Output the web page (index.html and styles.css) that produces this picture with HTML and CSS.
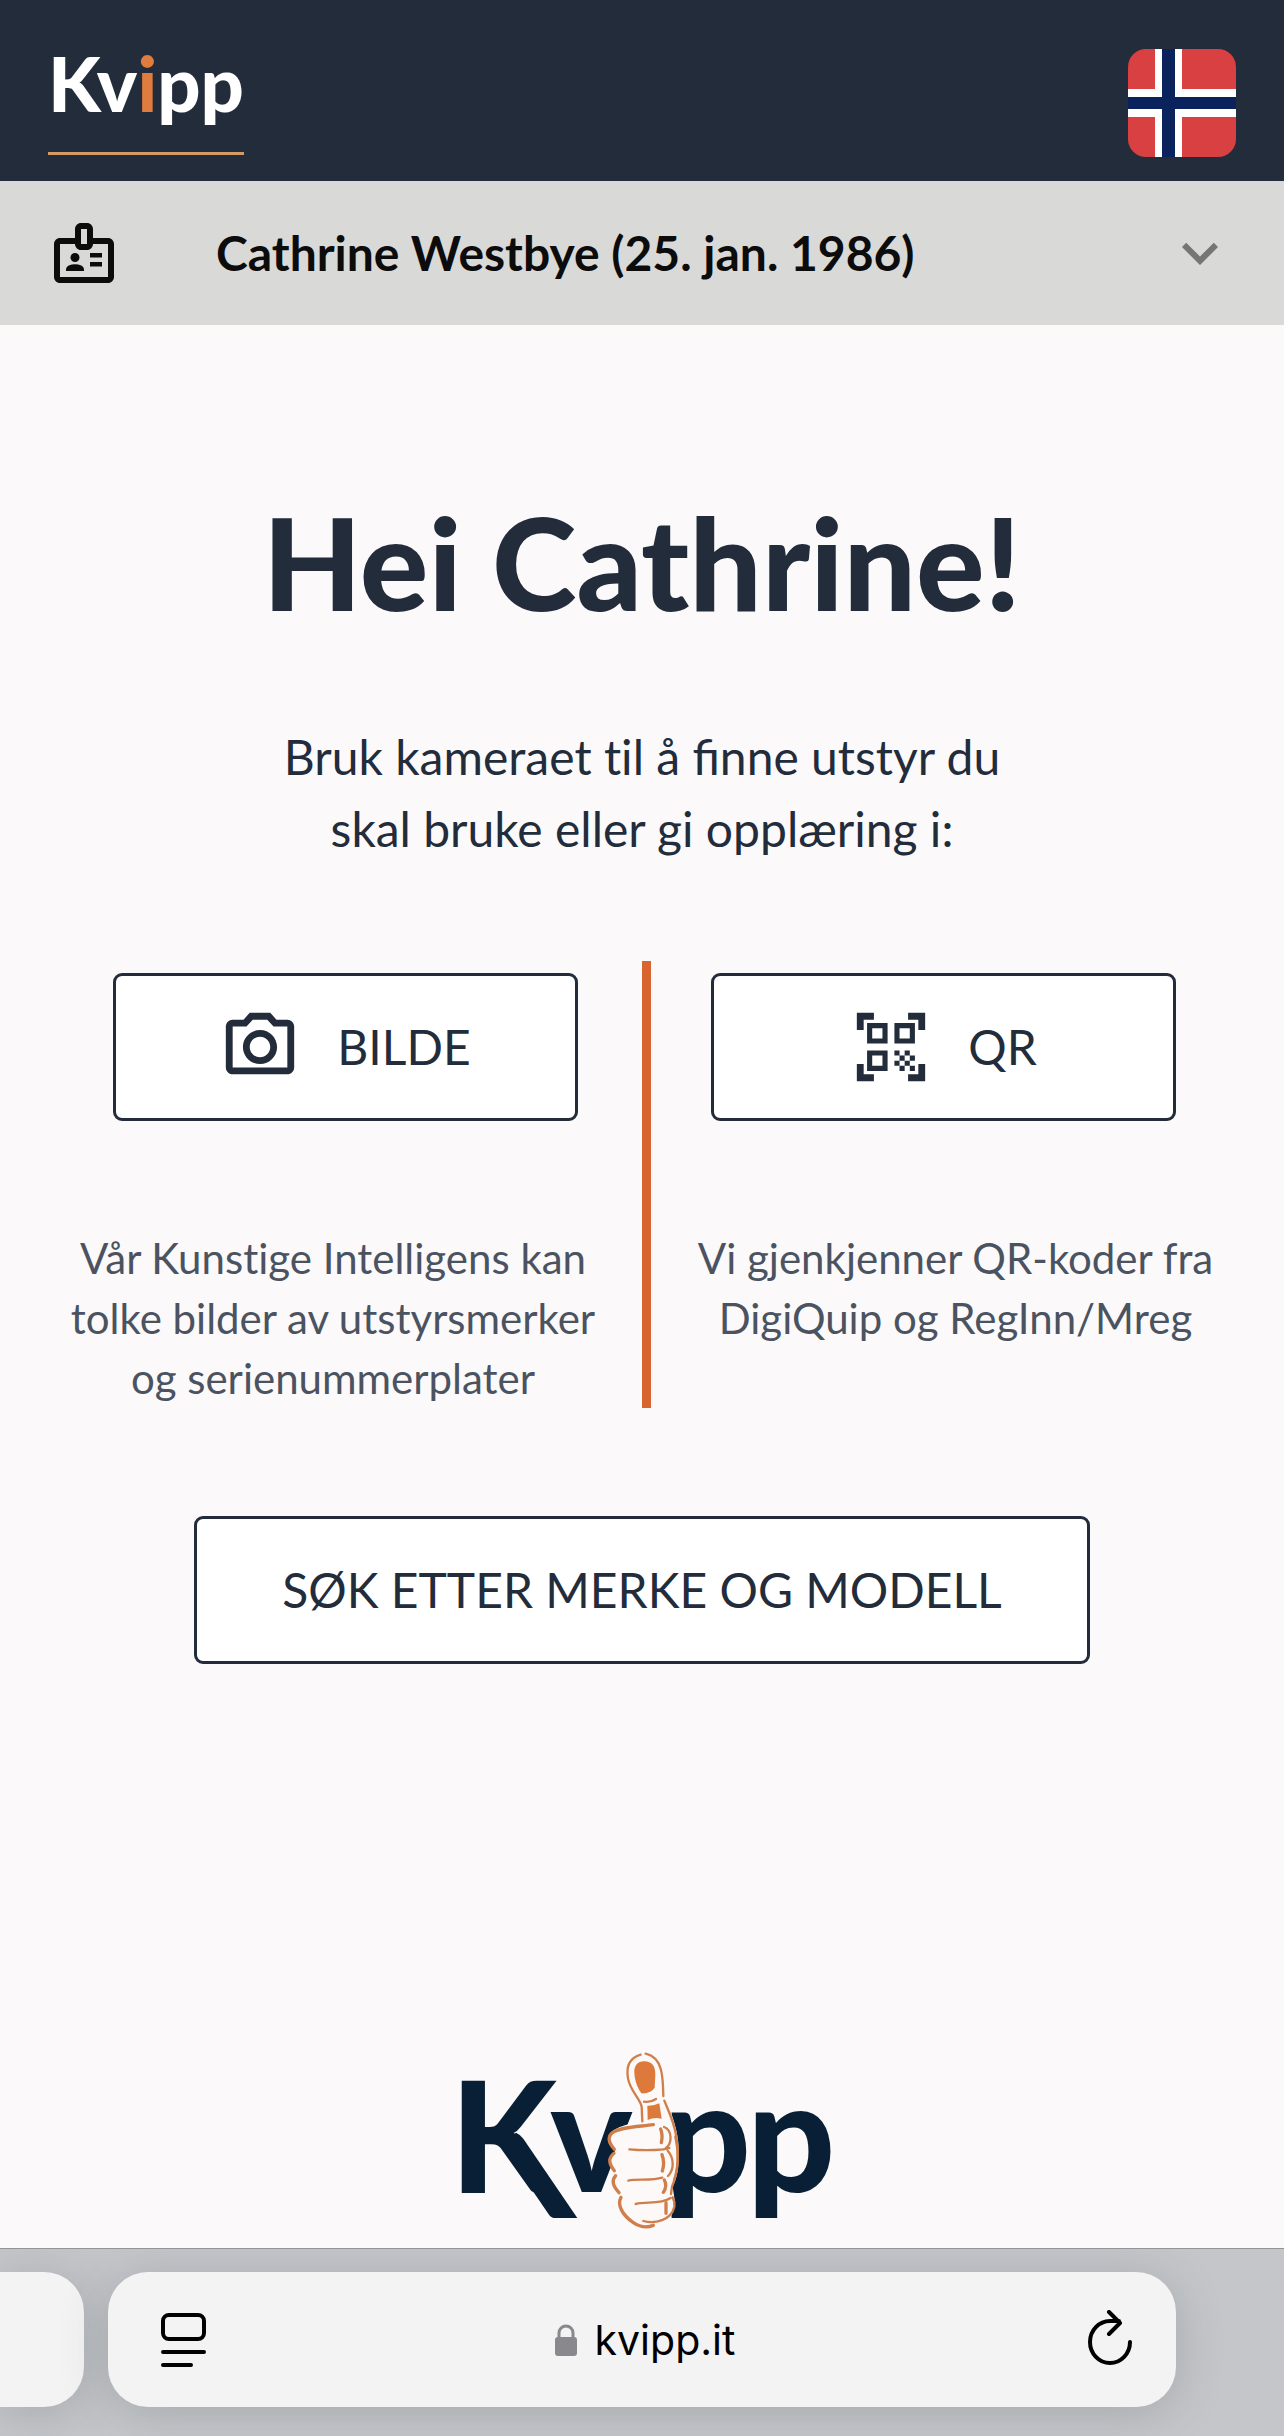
FILE: index.html
```html
<!DOCTYPE html>
<html lang="no">
<head>
<meta charset="utf-8">
<meta name="viewport" content="width=device-width, initial-scale=1">
<title>Kvipp</title>
<link rel="stylesheet" href="styles.css">
</head>
<body>
<header class="topbar">
  <a class="brand" href="/">Kv<span class="brand-accent">i</span>pp</a>
  <button class="flag-button" type="button" aria-label="Norsk">
    <svg class="flag" viewBox="0 0 108 108" aria-hidden="true">
      <path fill="#d94042" d="M0 0h108v108H0z"/>
      <path fill="#fff" d="M27 0h27v108H27zM0 40h108v28H0z"/>
      <path fill="#0b235d" d="M34 0h13v108H34zM0 48h108v12H0z"/>
    </svg>
  </button>
</header>

<button class="userbar" type="button" aria-expanded="false">
  <svg class="userbar-icon" viewBox="0 0 24 24" aria-hidden="true">
    <path d="M14 12h4v1.500h-4zM14 15h4v1.500h-4zM20 7h-5V4c0-1.100-.9-2-2-2h-2c-1.100 0-2 .9-2 2v3H4c-1.100 0-2 .9-2 2v11c0 1.100.9 2 2 2h16c1.100 0 2-.9 2-2V9c0-1.100-.9-2-2-2zm-9-3h2v5h-2V4zm9 16H4V9h5c0 1.100.9 2 2 2h2c1.100 0 2-.9 2-2h5v11z"/>
    <circle cx="9" cy="13.500" r="1.500"/>
    <path d="M11.080 16.180C10.440 15.900 9.740 15.750 9 15.750s-1.440.15-2.080.43C6.360 16.420 6 16.960 6 17.570V18h6v-.43c0-.61-.36-1.150-.92-1.390z"/>
  </svg>
  <span class="userbar-name">Cathrine Westbye (25. jan. 1986)</span>
  <svg class="userbar-chevron" viewBox="0 0 24 24" aria-hidden="true"><path d="M16.590 8.590 12 13.170 7.410 8.590 6 10l6 6 6-6z"/></svg>
</button>

<main class="content">
  <h1 class="greeting">Hei Cathrine!</h1>
  <p class="intro">Bruk kameraet t&zwnj;il å finne utstyr du skal bruke eller gi opplæring i:</p>

  <div class="options">
    <section class="option option-image">
      <button class="btn btn-option" type="button">
        <svg class="btn-icon" viewBox="0 0 24 24" aria-hidden="true"><path d="M20 4h-3.170L15 2H9L7.170 4H4c-1.100 0-2 .9-2 2v12c0 1.100.9 2 2 2h16c1.100 0 2-.9 2-2V6c0-1.100-.9-2-2-2zm0 14H4V6h4.050l1.830-2h4.240l1.830 2H20v12zM12 7c-2.760 0-5 2.240-5 5s2.240 5 5 5 5-2.240 5-5-2.240-5-5-5zm0 8c-1.650 0-3-1.350-3-3s1.350-3 3-3 3 1.350 3 3-1.350 3-3 3z"/></svg>
        BILDE
      </button>
      <p class="option-text">Vår Kunst&zwnj;ige Intelligens kan tolke bilder av utstyrsmerker og serienummerplater</p>
    </section>
    <section class="option option-qr">
      <button class="btn btn-option" type="button">
        <svg class="btn-icon" viewBox="0 0 24 24" aria-hidden="true"><path d="M9.500 6.500v3h-3v-3h3M11 5H5v6h6V5zM9.500 14.500v3h-3v-3h3M11 13H5v6h6v-6zM17.500 6.500v3h-3v-3h3M19 5h-6v6h6V5zM13 13h1.500v1.500H13V13zM14.500 14.500H16V16h-1.500v-1.500zM16 13h1.500v1.500H16V13zM13 16h1.500v1.500H13V16zM14.500 17.500H16V19h-1.500v-1.500zM16 16h1.500v1.500H16V16zM17.500 14.500H19V16h-1.500v-1.500zM17.500 17.500H19V19h-1.500v-1.500zM22 7h-2V4h-3V2h5v5zM22 22v-5h-2v3h-3v2h5zM2 22h5v-2H4v-3H2v5zM2 2v5h2V4h3V2H2z"/></svg>
        QR
      </button>
      <p class="option-text">Vi gjenkjenner QR-koder fra DigiQuip og RegInn/Mreg</p>
    </section>
  </div>

  <button class="btn btn-search" type="button">SØK ETTER MERKE OG MODELL</button>

  <svg class="logo" viewBox="30 54 1152 552" role="img" aria-label="Kvipp">
    <g class="logo-text">
      <text x="30" y="490">K</text>
      <text x="331" y="487">v</text>
      <text x="668" y="487">p</text>
      <text x="921" y="487">p</text>
    </g>
    <path fill="#091f35" d="M184 345L228 308Q240 313 250 326L412 564H346Q334 564 327 554Z"/>
    <path fill="#fdf9f8" d="M612 70C575 72 558 100 562 140C566 180 600 210 606 274C560 282 508 296 504 325C503 345 518 355 525 365C502 380 500 400 525 425C512 445 515 465 538 495C530 520 540 545 570 575C600 600 640 598 665 578C690 572 706 545 704 510L698 470C715 440 720 380 714 330C708 280 690 240 672 195C676 140 664 74 612 70Z"/>
    <g class="hand-fill">
      <path d="M610 94C636 93 646 108 646 135L644 172C640 184 620 192 604 190C590 170 582 145 583 120C586 102 596 95 610 94Z"/>
      <path d="M622 227Q642 228 658 220L665 266Q642 260 623 270Z"/>
    </g>
    <g class="hand-line">
      <path d="M602 74C568 84 558 110 564 145C570 182 600 205 605 230L607 274"/>
      <path d="M617 71C668 82 669 140 670 198"/>
      <path d="M673 212C686 245 700 270 708 315C718 370 716 420 696 470L693 492"/>
      <path d="M612 215Q632 218 648 207"/>
      <path class="heavy" d="M640 284C600 290 540 290 516 309C500 324 509 340 523 358"/>
      <path class="heavy" d="M522 370C504 385 506 400 523 422"/>
      <path class="heavy" d="M527 437C514 452 518 466 537 488"/>
      <path class="heavy" d="M543 502C530 525 548 556 580 578C598 590 618 595 640 586"/>
      <path d="M568 358Q620 363 670 358M670 358L688 354"/>
      <path d="M565 452C590 446 635 453 667 443"/>
      <path d="M587 522C620 514 660 524 692 504"/>
      <path d="M610 573C645 583 694 570 703 530Q705 515 698 502"/>
      <path d="M672 291C697 300 697 340 678 354"/>
      <path d="M683 362C704 385 702 420 684 438"/>
      <path class="heavy" d="M662 297Q669 316 664 338M666 374Q675 398 667 423M673 450Q683 468 670 487M678 518V550"/>
      <path d="M706 320C718 370 714 420 702 450"/>
    </g>
  </svg>
</main>

<nav class="browserbar" aria-label="Nettleser">
  <div class="tab-previous"></div>
  <div class="addressbar">
    <button class="bar-button" type="button" aria-label="Sidemeny">
      <svg class="bar-icon" viewBox="0 0 48 60" aria-hidden="true" fill="none" stroke="#000" stroke-width="4" stroke-linecap="round"><rect x="3" y="5" width="41" height="24" rx="6"/><path d="M3 42h41M3 55h28"/></svg>
    </button>
    <button class="address" type="button">
      <svg class="lock" viewBox="0 0 22 32" aria-hidden="true"><path fill="none" stroke="#88888d" stroke-width="3" d="M4 15V9a7 7 0 0 1 14 0v6"/><rect y="13" width="22" height="19" rx="3" fill="#88888d"/></svg>
      kvipp.it
    </button>
    <button class="bar-button" type="button" aria-label="Last inn på nytt">
      <svg class="bar-icon" viewBox="0 0 48 60" aria-hidden="true" fill="none" stroke="#000" stroke-width="4" stroke-linecap="round" stroke-linejoin="round"><path d="M44 32A20 21 0 1 1 24 11H33M23 2L34 13L23 24"/></svg>
    </button>
  </div>
</nav>
</body>
</html>
```
FILE: styles.css
```css
* {
  box-sizing: border-box;
}

body {
  display: flex;
  flex-direction: column;
  min-height: 100vh;
  margin: 0;
  background: #fbf9fa;
  color: #232c3a;
  font-family: Lato, "Liberation Sans", sans-serif;
}

button {
  margin: 0;
  padding: 0;
  border: 0;
  background: none;
  color: inherit;
  font: inherit;
  cursor: pointer;
}

svg {
  display: block;
  flex: none;
}

.topbar {
  display: flex;
  align-items: flex-start;
  justify-content: space-between;
  height: 181px;
  padding: 49px 48px 24px;
  background: #232c3b;
}

.brand {
  height: 106px;
  border-bottom: 3px solid #d59a63;
  color: #fff;
  font-size: 76px;
  font-weight: 900;
  line-height: 68px;
  text-decoration: none;
}

.brand-accent {
  color: #e07c3e;
}

.flag {
  width: 108px;
  height: 108px;
  border-radius: 18px;
}

.userbar {
  display: flex;
  align-items: center;
  height: 144px;
  padding: 0 48px;
  background: #d9d9d7;
  color: #0c0c0c;
  text-align: left;
}

.userbar-icon,
.userbar-chevron {
  width: 72px;
  height: 72px;
  fill: currentColor;
}

.userbar-chevron {
  color: #757574;
}

.userbar-name {
  flex: 1;
  padding-left: 96px;
  font-size: 48px;
  font-weight: 700;
  line-height: 72px;
}

.content {
  display: flex;
  flex: 1;
  flex-direction: column;
  align-items: center;
  padding: 165px 24px 16px;
  text-align: center;
}

.greeting {
  margin: 0 0 87px;
  font-family: "Lato Black", Lato, "Liberation Sans", sans-serif;
  font-size: 128px;
  font-weight: 900;
  line-height: 144px;
}

.intro {
  max-width: 800px;
  margin: 0 0 96px;
  font-size: 48px;
  line-height: 72px;
}

.options {
  display: grid;
  grid-template-columns: 1fr 1fr;
  width: 100%;
  margin-bottom: 108px;
}

.option {
  display: flex;
  flex-direction: column;
  padding-top: 12px;
}

.option-image {
  padding-left: 24px;
}

.option-image .option-text {
  margin-left: -24px;
}

.option-qr {
  padding-right: 24px;
  border-left: 9px solid #d8652e;
}

.option-qr .option-text {
  margin-right: -24px;
}

.option-text {
  margin-top: 107px;
  margin-bottom: 0;
  padding: 0 36px;
  color: #4b5361;
  font-size: 42px;
  line-height: 60px;
}

.btn {
  display: flex;
  align-items: center;
  justify-content: center;
  height: 148px;
  border: 3px solid #232c3a;
  border-radius: 9px;
  background: #fff;
  font-size: 48px;
  line-height: 72px;
}

.btn-option {
  gap: 36px;
  width: 465px;
  max-width: 100%;
  align-self: center;
}

.btn-icon {
  width: 82px;
  height: 82px;
  fill: currentColor;
}

.btn-search {
  padding: 0 85px;
}

.logo {
  width: 384px;
  height: 184px;
  margin-top: auto;
  overflow: visible;
}

.logo-text {
  fill: #091f35;
  font-size: 464px;
  font-weight: 900;
}

.hand-fill {
  fill: #dd7a3b;
}

.hand-line {
  fill: none;
  stroke: #d07f4b;
  stroke-linecap: round;
  stroke-width: 7px;
}

.hand-line .heavy {
  stroke-width: 10px;
}

.browserbar {
  display: flex;
  height: 188px;
  padding: 23px 108px 28px 0;
  gap: 24px;
  overflow: hidden;
  border-top: 1px solid #929497;
  background: #c4c6ca;
  color: #000;
  font-family: Inter, "Liberation Sans", sans-serif;
}

.tab-previous,
.addressbar {
  height: 135px;
  background: #f3f3f4;
  box-shadow: 0 6px 48px rgba(60, 70, 70, 0.22);
}

.tab-previous {
  width: 84px;
  border-radius: 0 40px 40px 0;
}

.addressbar {
  display: flex;
  flex: 1;
  align-items: center;
  justify-content: space-between;
  padding: 0 42px 0 52px;
  border-radius: 40px;
}

.bar-icon {
  width: 48px;
  height: 60px;
}

.address {
  display: flex;
  align-items: center;
  gap: 18px;
  padding-right: 4px;
  font-size: 41px;
  line-height: 60px;
}

.lock {
  width: 22px;
  height: 32px;
}
```
